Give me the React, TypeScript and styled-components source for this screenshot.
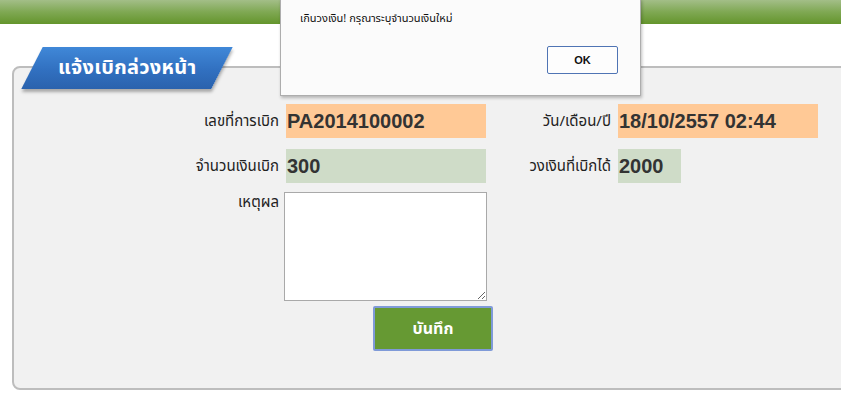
import React from "react";
import { createGlobalStyle, styled } from "styled-components";

const GlobalStyle = createGlobalStyle`
  html, body {
    margin: 0;
    padding: 0;
    background: #ffffff;
    overflow: hidden;
  }
  body {
    font-family: Tahoma, "Noto Sans Thai", "Liberation Sans", "DejaVu Sans", sans-serif;
    color: #222;
  }
`;

export default function App() {
  return (
    <Page>
      <GlobalStyle />
      <TopBar />

      <Main>
        <Panel>
          <TitleTab>
            <span>แจ้งเบิกล่วงหน้า</span>
          </TitleTab>

          <Form>
            <Label>เลขที่การเบิก</Label>
            <Value tone="orange">PA2014100002</Value>
            <Label>วัน/เดือน/ปี</Label>
            <Value tone="orange">18/10/2557 02:44</Value>

            <Label>จำนวนเงินเบิก</Label>
            <Value tone="green">300</Value>
            <Label>วงเงินที่เบิกได้</Label>
            <Value tone="green" narrow>
              2000
            </Value>

            <Label top>เหตุผล</Label>
            <Reason />

            <SaveButton>บันทึก</SaveButton>
          </Form>
        </Panel>
      </Main>

      <AlertBox>
        <AlertText>เกินวงเงิน! กรุณาระบุจำนวนเงินใหม่</AlertText>
        <AlertActions>
          <OkButton>OK</OkButton>
        </AlertActions>
      </AlertBox>
    </Page>
  );
}

const Page = styled.div`
  position: relative;
  width: 841px;
  height: 404px;
  overflow: hidden;
`;

const TopBar = styled.div`
  height: 24px;
  background: linear-gradient(to bottom, #a3be88 0%, #7fa853 50%, #64952c 100%);
`;

const Main = styled.div`
  padding: 42px 0 0 12px;
`;

const Panel = styled.div`
  position: relative;
  width: 880px;
  box-sizing: border-box;
  background: #f1f1f1;
  border: 2px solid #bdbdbd;
  border-radius: 8px;
  padding: 36px 0 37px 0;
`;

const TitleTab = styled.div`
  position: absolute;
  top: -21px;
  left: 18px;
  width: 190px;
  height: 42px;
  display: flex;
  align-items: center;
  justify-content: center;
  transform: skewX(-27deg);
  background: linear-gradient(to bottom, #4088d8 0%, #3170c0 55%, #2a62ad 100%);
  box-shadow: 2px 3px 3px rgba(0, 0, 0, 0.3);

  span {
    transform: skewX(27deg);
    color: #ffffff;
    font-size: 20px;
    font-weight: bold;
    letter-spacing: 0.3px;
  }
`;

const Form = styled.div`
  display: grid;
  grid-template-columns: 265px 200px 118px 200px;
  column-gap: 7px;
  row-gap: 11px;
  align-items: center;
`;

const Label = styled.div<{ top?: boolean }>`
  text-align: right;
  font-size: 15px;
  color: #222;
  white-space: nowrap;
  align-self: ${({ top }) => (top ? "start" : "center")};
  margin-top: ${({ top }) => (top ? "-3px" : "0")};
`;

const Value = styled.div<{ tone: "orange" | "green"; narrow?: boolean }>`
  height: 34px;
  width: ${({ narrow }) => (narrow ? "63px" : "200px")};
  box-sizing: border-box;
  padding-left: 1px;
  display: flex;
  align-items: center;
  background: ${({ tone }) => (tone === "orange" ? "#ffc996" : "#cfdcc8")};
  font-family: "Liberation Sans", Arial, sans-serif;
  font-size: 20px;
  font-weight: bold;
  color: #333;
`;

const Reason = styled.textarea`
  grid-column: 2 / 3;
  width: 203px;
  height: 109px;
  margin: -2px 0 0 -2px;
  box-sizing: border-box;
  border: 1px solid #a9a9a9;
  background: #ffffff;
  resize: both;
`;

const SaveButton = styled.button`
  grid-column: 2 / 4;
  justify-self: start;
  margin: -6px 0 0 87px;
  width: 120px;
  height: 45px;
  background: #669933;
  border: 2px solid #7f9ad8;
  border-radius: 2px;
  color: #ffffff;
  font-family: Tahoma, "Noto Sans Thai", "Liberation Sans", sans-serif;
  font-size: 16px;
  font-weight: bold;
  cursor: pointer;
`;

const AlertBox = styled.div`
  position: absolute;
  top: -2px;
  left: 280px;
  width: 361px;
  height: 98px;
  box-sizing: border-box;
  background: #fbfbfb;
  border: 1px solid #adadad;
  box-shadow: 1px 2px 3px rgba(0, 0, 0, 0.25);
  padding: 11px 22px 0 19px;
`;

const AlertText = styled.div`
  font-size: 11px;
  color: #111;
`;

const AlertActions = styled.div`
  display: flex;
  justify-content: flex-end;
  margin-top: 19px;
`;

const OkButton = styled.button`
  width: 71px;
  height: 28px;
  background: #fdfdfd;
  border: 1px solid #4f74b4;
  border-radius: 2px;
  font-family: Tahoma, "Liberation Sans", sans-serif;
  font-size: 11px;
  font-weight: bold;
  color: #111;
`;
